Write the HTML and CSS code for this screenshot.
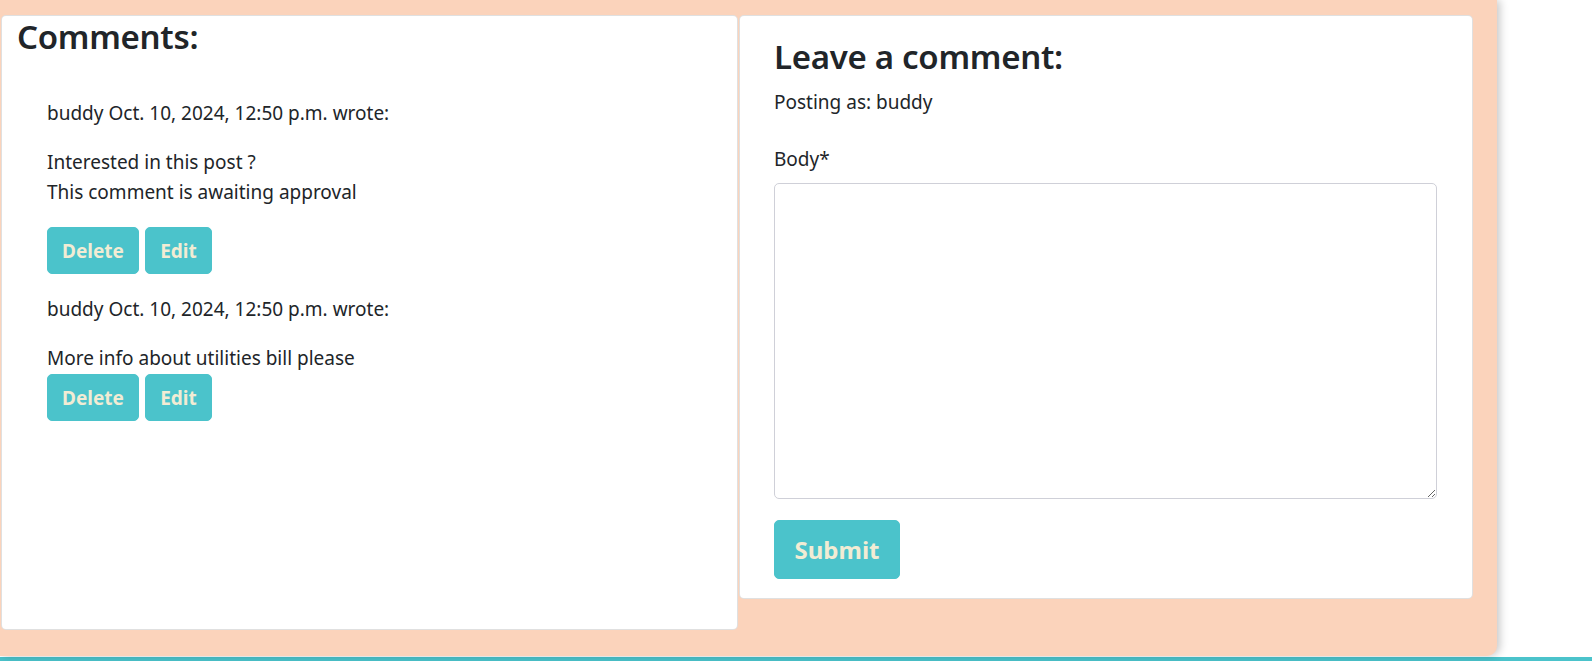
FILE: index.html
```html
<!DOCTYPE html>
<html lang="en">
<head>
<meta charset="utf-8">
<title>Comments</title>
<link rel="stylesheet" href="styles.css">
</head>
<body>
<div class="page">
  <main class="wrap">
    <section class="card comments">
      <h2 class="title">Comments:</h2>
      <div class="comment-list">
        <article class="comment">
          <p class="meta">buddy Oct. 10, 2024, 12:50 p.m. wrote:</p>
          <div class="comment-body">
            <p>Interested in this post ?</p>
            <p>This comment is awaiting approval</p>
          </div>
          <div class="actions">
            <button class="btn btn-delete" type="button">Delete</button>
            <button class="btn btn-edit" type="button">Edit</button>
          </div>
        </article>
        <article class="comment">
          <p class="meta">buddy Oct. 10, 2024, 12:50 p.m. wrote:</p>
          <div class="comment-body tight">
            <p>More info about utilities bill please</p>
          </div>
          <div class="actions">
            <button class="btn btn-delete" type="button">Delete</button>
            <button class="btn btn-edit" type="button">Edit</button>
          </div>
        </article>
      </div>
    </section>
    <section class="card form-card">
      <h2 class="title">Leave a comment:</h2>
      <p class="posting">Posting as: buddy</p>
      <form class="comment-form">
        <label class="label" for="body">Body*</label>
        <textarea id="body" class="textarea"></textarea>
        <button class="btn btn-lg" type="button">Submit</button>
      </form>
    </section>
  </main>
  <footer class="footer"></footer>
</div>
</body>
</html>
```
FILE: styles.css
```css
html, body {
  margin: 0;
  padding: 0;
  background: #ffffff;
}

body {
  font-family: "Noto Sans", "Open Sans", sans-serif;
  font-size: 19px;
  line-height: 30px;
  color: #212529;
}

.page {
  width: 1592px;
  height: 661px;
  overflow: hidden;
}

.wrap {
  display: flex;
  align-items: flex-start;
  gap: 1px;
  width: 1497px;
  height: 656px;
  box-sizing: border-box;
  padding: 15px 24px 0 1px;
  background: #fbd3bb;
  border-bottom-right-radius: 10px;
  box-shadow: 3px 0 8px rgba(0, 0, 0, 0.22);
  position: relative;
  z-index: 1;
}

.card {
  background: #ffffff;
  border: 1px solid rgba(0, 0, 0, 0.12);
  border-radius: 5px;
  box-sizing: border-box;
}

.comments {
  width: 737px;
  height: 615px;
  padding: 0 14px 0 15px;
}

.form-card {
  width: 734px;
  padding: 20px 35px 19px 34px;
}

.title {
  margin: 0;
  font-size: 33px;
  line-height: 42px;
  font-weight: 600;
  letter-spacing: -0.3px;
  color: #212529;
}

.comment-list {
  margin-top: 40px;
}

.comment {
  padding-left: 30px;
}

.comment p {
  margin: 0;
}

.comment .meta {
  margin-bottom: 19px;
}

.comment-body {
  margin-bottom: 20px;
}

.comment-body.tight {
  margin-bottom: 1px;
}

.actions {
  display: flex;
  gap: 6px;
  margin-bottom: 20px;
}

.btn {
  box-sizing: border-box;
  height: 47px;
  padding: 7px 0;
  border: 1px solid #4bc3cb;
  border-radius: 5px;
  background: #4bc3cb;
  color: #f2ecd4;
  font-family: inherit;
  font-size: 19px;
  line-height: 30px;
  font-weight: 700;
  text-align: center;
  cursor: pointer;
}

.btn-delete {
  width: 92px;
}

.btn-edit {
  width: 67px;
}

.posting {
  margin: 9px 0 27px;
}

.comment-form {
  display: flex;
  flex-direction: column;
  align-items: flex-start;
}

.label {
  display: block;
  margin-bottom: 9px;
}

.textarea {
  display: block;
  width: 663px;
  height: 316px;
  box-sizing: border-box;
  margin: 0 0 21px;
  padding: 7px 15px;
  border: 1px solid #cfd0d8;
  border-radius: 5px;
  font-family: inherit;
  font-size: 19px;
  resize: vertical;
}

.btn-lg {
  width: 126px;
  height: 59px;
  padding: 10px 0;
  font-size: 24px;
  line-height: 37px;
}

.footer {
  margin-top: 1px;
  height: 12px;
  background: #4bc3cb;
}
```
